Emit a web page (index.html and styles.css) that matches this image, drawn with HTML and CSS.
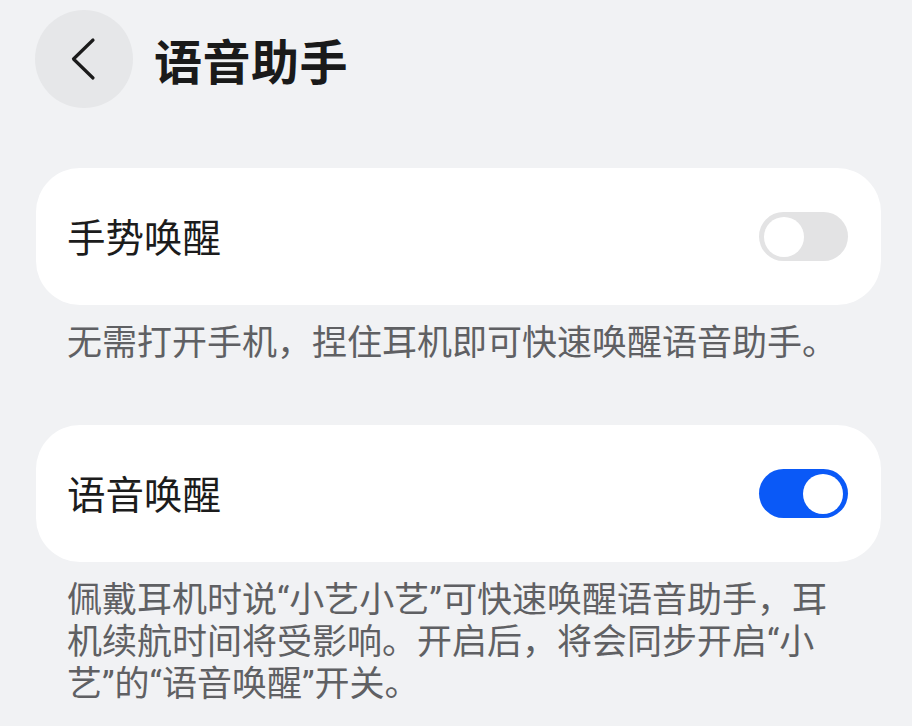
FILE: index.html
```html
<!DOCTYPE html>
<html lang="zh-CN">
<head>
<meta charset="utf-8">
<link rel="stylesheet" href="styles.css">
</head>
<body>
<div class="page">
  <header class="header">
    <button class="back" aria-label="返回">
      <svg width="98" height="98" viewBox="0 0 98 98"><path d="M58 30 L38.5 49 L58 68" fill="none" stroke="#1b1b1b" stroke-width="3.2" stroke-linecap="round" stroke-linejoin="round"/></svg>
    </button>
    <h1 class="title">语音助手</h1>
  </header>

  <section class="card">
    <span class="label">手势唤醒</span>
    <span class="switch"><span class="knob"></span></span>
  </section>
  <p class="desc">无需打开手机，捏住耳机即可快速唤醒语音助手。</p>

  <section class="card card-second">
    <span class="label">语音唤醒</span>
    <span class="switch on"><span class="knob"></span></span>
  </section>
  <p class="desc">佩戴耳机时说“小艺小艺”可快速唤醒语音助手，耳机续航时间将受影响。开启后，将会同步开启“小艺”的“语音唤醒”开关。</p>
</div>
</body>
</html>
```

FILE: styles.css
```css
* { box-sizing: border-box; }
html, body {
  margin: 0;
  padding: 0;
  background: #f1f2f4;
}
body {
  font-family: "Roboto", "Noto Sans CJK SC", sans-serif;
  width: 912px;
  height: 726px;
  overflow: hidden;
}
.page {
  padding: 0 31px 0 36px;
}
.header {
  display: flex;
  align-items: center;
  padding-top: 10px;
  height: 108px;
  margin-left: -1px;
}
.back {
  width: 98px;
  height: 98px;
  border-radius: 50%;
  border: 0;
  padding: 0;
  background: #e6e7e9;
  display: flex;
  align-items: center;
  justify-content: center;
  flex: none;
}
.title {
  margin: 0 0 0 21px;
  font-family: "Noto Sans CJK SC", sans-serif;
  font-size: 48px;
  font-weight: 700;
  color: #1a1a1a;
  line-height: 1;
  letter-spacing: 0.5px;
}
.card {
  margin-top: 60px;
  height: 137px;
  background: #ffffff;
  border-radius: 44px;
  display: flex;
  align-items: center;
  justify-content: space-between;
  padding: 0 33px 0 31px;
}
.card-second {
  margin-top: 60px;
}
.label {
  font-family: "Noto Sans CJK SC", sans-serif;
  font-size: 38.5px;
  font-weight: 400;
  color: #1c1c1c;
  line-height: 1;
  margin-top: -3px;
}
.switch {
  width: 89px;
  height: 49px;
  border-radius: 25px;
  background: #e3e3e4;
  display: flex;
  align-items: center;
  padding: 0 5px;
}
.knob {
  width: 40px;
  height: 40px;
  border-radius: 50%;
  background: #ffffff;
}
.switch.on {
  background: #0a59f7;
  justify-content: flex-end;
}
.desc {
  margin: 18px 0 0 31px;
  width: 786px;
  font-size: 35px;
  line-height: 42px;
  color: #5f6063;
}
```
